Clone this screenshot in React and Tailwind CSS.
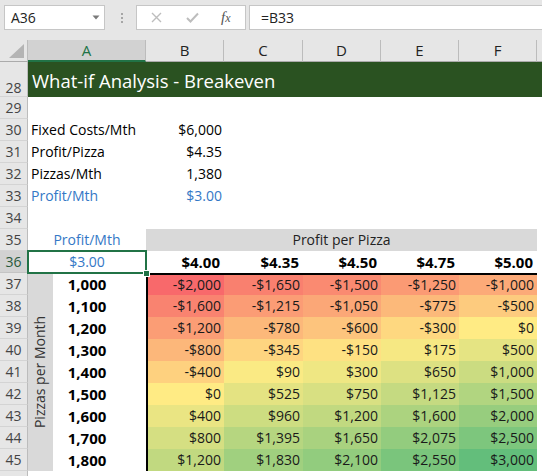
import React from 'react';

const prices = [4, 4.35, 4.5, 4.75, 5];
const priceLabels = ['$4.00', '$4.35', '$4.50', '$4.75', '$5.00'];
const pizzas = [1000, 1100, 1200, 1300, 1400, 1500, 1600, 1700, 1800];
const COLW = ['w-[78px]', 'w-[79px]', 'w-[78px]', 'w-[78px]', 'w-[78px]'];

function fmt(v) {
  const a = Math.round(Math.abs(v)).toLocaleString('en-US');
  return (v < 0 ? '-$' : '$') + a;
}
function mix(a, b, t) {
  return a.map((x, i) => Math.round(x + (b[i] - x) * t));
}
function heat(v) {
  const R = [248, 105, 107], Y = [255, 235, 132], G = [99, 190, 123];
  const c = v <= 0 ? mix(R, Y, (v + 2000) / 2000) : mix(Y, G, v / 3000);
  return `rgb(${c.join(',')})`;
}

function RowHead({ n, active, end }) {
  return (
    <div
      className={`w-[28px] shrink-0 border-r border-b flex justify-center text-[14px] ${
        active
          ? 'bg-[#d2d2d2] text-[#2a5a3c] border-r-[#bcbcbc] border-b-[#c4c4c4]'
          : 'bg-[#e6e6e6] text-[#444444] border-r-[#bcbcbc] border-b-[#d4d4d4]'
      } ${end ? 'items-end pb-[1px]' : 'items-center'}`}
    >
      {n}
    </div>
  );
}

function Row({ n, active, children }) {
  return (
    <div className="flex h-[22px]">
      <RowHead n={n} active={active} />
      {children}
    </div>
  );
}

function LabelRow({ n, label, value, blue }) {
  return (
    <Row n={n}>
      <div className={`w-[118px] shrink-0 flex items-center pl-[3px] ${blue ? 'text-[#3478c6]' : 'text-black'}`}>{label}</div>
      <div className={`w-[78px] shrink-0 flex items-center justify-end pr-[2px] ${blue ? 'text-[#3478c6]' : 'text-black'}`}>{value}</div>
    </Row>
  );
}

export default function App() {
  return (
    <div className="w-[542px] h-[476px] overflow-hidden bg-white font-['Open_Sans','Liberation_Sans',sans-serif] text-[14px] leading-none text-black">
      {/* Formula bar */}
      <div className="h-[40px] bg-[#e6e6e6] flex items-start pt-[5px]">
        <div className="ml-[4px] w-[101px] h-[25px] shrink-0 bg-white border border-[#c6c6c6] flex items-center pl-[6px] pr-[4px] text-[14px] text-[#222222]">
          <span>A36</span>
          <svg className="ml-auto" width="8" height="5" viewBox="0 0 8 5">
            <path d="M0.5 0.5 L7.5 0.5 L4 4.5 Z" fill="#7a7a7a" />
          </svg>
        </div>
        <div className="ml-[15px] w-[3px] h-[25px] shrink-0 flex flex-col items-center justify-center gap-[2px]">
          <div className="w-[2px] h-[2px] bg-[#a6a6a6]" />
          <div className="w-[2px] h-[2px] bg-[#a6a6a6]" />
          <div className="w-[2px] h-[2px] bg-[#a6a6a6]" />
        </div>
        <div className="ml-[13px] w-[110px] h-[25px] shrink-0 bg-white border border-[#c6c6c6] flex items-center">
          <svg className="ml-[14px]" width="11" height="11" viewBox="0 0 11 11">
            <path d="M1 1 L10 10 M10 1 L1 10" stroke="#bdbdbd" strokeWidth="1.4" />
          </svg>
          <svg className="ml-[24px]" width="13" height="11" viewBox="0 0 13 11">
            <path d="M1 6 L4.5 9.5 L12 1.5" stroke="#bdbdbd" strokeWidth="2" fill="none" />
          </svg>
          <span className="ml-[22px] font-['Liberation_Serif',serif] italic text-[15px] text-[#555555]">
            f<span className="text-[12px]">x</span>
          </span>
        </div>
        <div className="ml-[3px] flex-1 h-[25px] bg-white border border-[#c6c6c6] border-r-0 flex items-center pl-[11px] text-[14px] text-[#222222]">
          =B33
        </div>
      </div>

      {/* Column headers */}
      <div className="flex h-[22px] text-[15px]">
        <div className="w-[28px] shrink-0 bg-[#e6e6e6] border-r border-b border-r-[#bcbcbc] border-b-[#ababab] flex items-end justify-end pr-[3px] pb-[3px]">
          <svg width="15" height="14" viewBox="0 0 15 14">
            <path d="M15 0 L15 14 L0 14 Z" fill="#b4b4b4" />
          </svg>
        </div>
        <div className="w-[118px] shrink-0 bg-[#d2d2d2] border-r border-r-[#bcbcbc] border-b-2 border-b-[#217346] flex items-center justify-center text-[#217346]">A</div>
        {['B', 'C', 'D', 'E', 'F'].map((c, i) => (
          <div key={c} className={`${COLW[i]} shrink-0 bg-[#e6e6e6] border-r border-b border-r-[#bcbcbc] border-b-[#ababab] flex items-center justify-center text-[#222222]`}>{c}</div>
        ))}
        <div className="flex-1 bg-[#e6e6e6] border-b border-b-[#ababab]" />
      </div>

      {/* Row 28 title */}
      <div className="flex h-[35px]">
        <RowHead n={28} end />
        <div className="flex-1 bg-[#2a5221] text-white text-[18.5px] flex items-end pl-[4px] pb-[7px]">
          What-if Analysis - Breakeven
        </div>
      </div>

      <Row n={29} />
      <LabelRow n={30} label="Fixed Costs/Mth" value="$6,000" />
      <LabelRow n={31} label="Profit/Pizza" value="$4.35" />
      <LabelRow n={32} label="Pizzas/Mth" value="1,380" />
      <LabelRow n={33} label="Profit/Mth" value="$3.00" blue />
      <Row n={34} />

      <Row n={35}>
        <div className="w-[118px] shrink-0 flex items-center justify-center text-[#3478c6]">Profit/Mth</div>
        <div className="w-[391px] shrink-0 bg-[#d9d9d9] flex items-center justify-center text-[#222222]">Profit per Pizza</div>
      </Row>

      <Row n={36} active>
        <div className="relative w-[118px] shrink-0 flex items-center justify-center text-[#3478c6]">
          $3.00
          <div className="absolute -left-[1px] -top-[1px] -right-[1px] -bottom-[1px] border-2 border-[#217346] z-10" />
          <div className="absolute -right-[4px] -bottom-[4px] w-[7px] h-[7px] bg-[#217346] border border-white z-20" />
        </div>
        {priceLabels.map((p, i) => (
          <div key={p} className={`${COLW[i]} shrink-0 flex items-center justify-end pr-[4px] font-bold text-[15px] text-black`}>{p}</div>
        ))}
      </Row>

      {/* Data table rows 37-45 */}
      <div className="flex">
        <div className="flex flex-col">
          {pizzas.map((p, r) => (
            <div key={p} className="flex h-[22px]">
              <RowHead n={37 + r} />
            </div>
          ))}
        </div>
        <div className="w-[25px] shrink-0 bg-[#d9d9d9] flex items-center justify-center">
          <span className="shrink-0 -rotate-90 whitespace-nowrap text-[#333333] text-[14px]">Pizzas per Month</span>
        </div>
        <div className="w-[93px] shrink-0 flex flex-col">
          {pizzas.map((p) => (
            <div key={p} className="h-[22px] flex items-center justify-center pr-[25px] font-bold text-[15px] text-black">
              {p.toLocaleString('en-US')}
            </div>
          ))}
        </div>
        <div className="flex flex-col">
          {pizzas.map((p, r) => (
            <div key={p} className="flex h-[22px]">
              {prices.map((pr, c) => {
                const v = p * pr - 6000;
                return (
                  <div
                    key={c}
                    className={`${COLW[c]} shrink-0 flex items-center justify-end pr-[3px] text-[#1a1a1a] ${r === 0 ? 'border-t-2 border-t-black' : ''} ${c === 0 ? 'border-l-2 border-l-black' : ''}`}
                    style={{ backgroundColor: heat(v) }}
                  >
                    {fmt(v)}
                  </div>
                );
              })}
            </div>
          ))}
        </div>
      </div>

      <Row n="" />
    </div>
  );
}
